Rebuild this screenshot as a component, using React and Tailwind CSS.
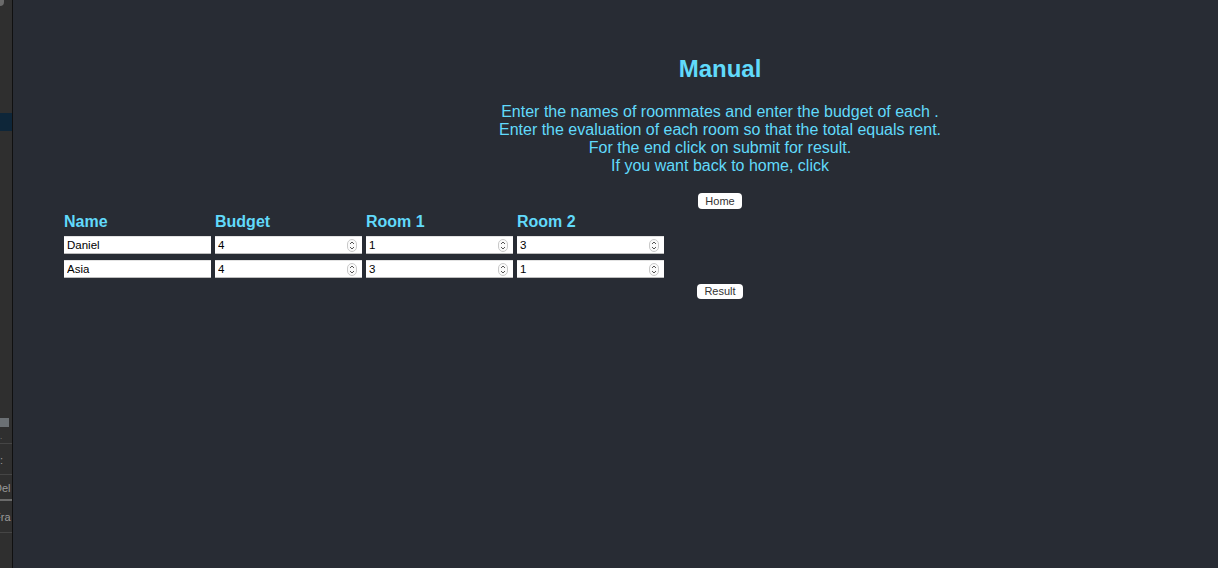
import React from "react";

function Spinner() {
  return (
    <svg width="10" height="13" viewBox="0 0 10 13" className="shrink-0">
      <rect x="0.5" y="0.5" width="9" height="12" rx="4.5" fill="#fafafa" stroke="#c9c9c9" />
      <path d="M3 5 L5 3 L7 5" fill="none" stroke="#555" strokeWidth="1" />
      <path d="M3 8 L5 10 L7 8" fill="none" stroke="#555" strokeWidth="1" />
    </svg>
  );
}

function Field({ value, number }) {
  return (
    <div className="flex h-[18px] w-[147px] items-center bg-white border-t border-t-[#e2e2e2] border-b border-b-[#bdbdbd] pl-[3px] pr-[5px]">
      <input
        readOnly
        defaultValue={value}
        className="min-w-0 flex-1 bg-transparent text-[11.5px] leading-[16px] text-black outline-none"
        style={{ fontFamily: "'Liberation Sans', Arial, sans-serif" }}
      />
      {number && <Spinner />}
    </div>
  );
}

export default function App() {
  const rows = [
    ["Daniel", "4", "1", "3"],
    ["Asia", "4", "3", "1"],
  ];
  return (
    <div className="flex h-[568px] w-[1218px] overflow-hidden font-['Liberation_Sans',Arial,sans-serif]">
      <aside className="relative flex w-[12px] shrink-0 flex-col bg-[#2f2f2f] border-r border-r-[#101010] box-content overflow-hidden">
        <div className="h-[6px] w-[4px] rounded-br-[4px] bg-[#6a6a6a]" />
        <div className="mt-[107px] h-[18px] bg-[#0e2639]" />
        <div className="mt-[287px] h-[9px] w-[9px] bg-[#6b7074]" />
        <div className="mt-[6px] h-[8px] text-[8px] leading-[8px] text-[#888]">.</div>
        <div className="mt-[2px] h-px bg-[#454545]" />
        <div className="mt-[10px] text-[11px] leading-[12px] text-[#999]">:</div>
        <div className="mt-[8px] h-px bg-[#454545]" />
        <div className="mt-[6px] -ml-[6px] text-[11px] leading-[14px] text-[#9a9a9a] whitespace-nowrap">Del</div>
        <div className="mt-[4px] h-[2px] bg-[#6a6a6a]" />
        <div className="mt-[9px] -ml-[6px] text-[11px] leading-[14px] text-[#9a9a9a] whitespace-nowrap">Fra</div>
        <div className="mt-[8px] h-px bg-[#454545]" />
      </aside>
      <main className="flex-1 bg-[#282c34] pt-[55px] text-[#61dafb]">
        <h2 className="ml-[457px] w-[500px] text-center text-[24px] font-bold leading-[28px]">Manual</h2>
        <p className="ml-[457px] mt-[20px] w-[500px] text-center text-[16px] leading-[18px]">
          Enter the names of roommates and enter the budget of each .
          <br />
          Enter the evaluation of each room so that the total equals rent.
          <br />
          For the end click on submit for result.
          <br />
          If you want back to home, click
        </p>
        <div className="ml-[457px] mt-[18px] flex w-[500px] justify-center">
          <button className="h-[16px] w-[44px] rounded-[4px] bg-white text-[11px] leading-[16px] text-[#333]">Home</button>
        </div>
        <div className="ml-[51px] mt-[4px] grid w-[600px] grid-cols-[147px_147px_147px_147px] gap-x-[4px]">
          {["Name", "Budget", "Room 1", "Room 2"].map((h) => (
            <div key={h} className="h-[18px] text-[16px] font-bold leading-[18px]">{h}</div>
          ))}
        </div>
        <div className="ml-[51px] mt-[5px] flex flex-col gap-y-[6px]">
          {rows.map((r, i) => (
            <div key={i} className="flex gap-x-[4px]">
              <Field value={r[0]} />
              <Field value={r[1]} number />
              <Field value={r[2]} number />
              <Field value={r[3]} number />
            </div>
          ))}
        </div>
        <div className="ml-[457px] mt-[6px] flex w-[500px] justify-center">
          <button className="h-[15px] w-[46px] rounded-[4px] bg-white text-[11px] leading-[15px] text-[#333]">Result</button>
        </div>
      </main>
    </div>
  );
}
